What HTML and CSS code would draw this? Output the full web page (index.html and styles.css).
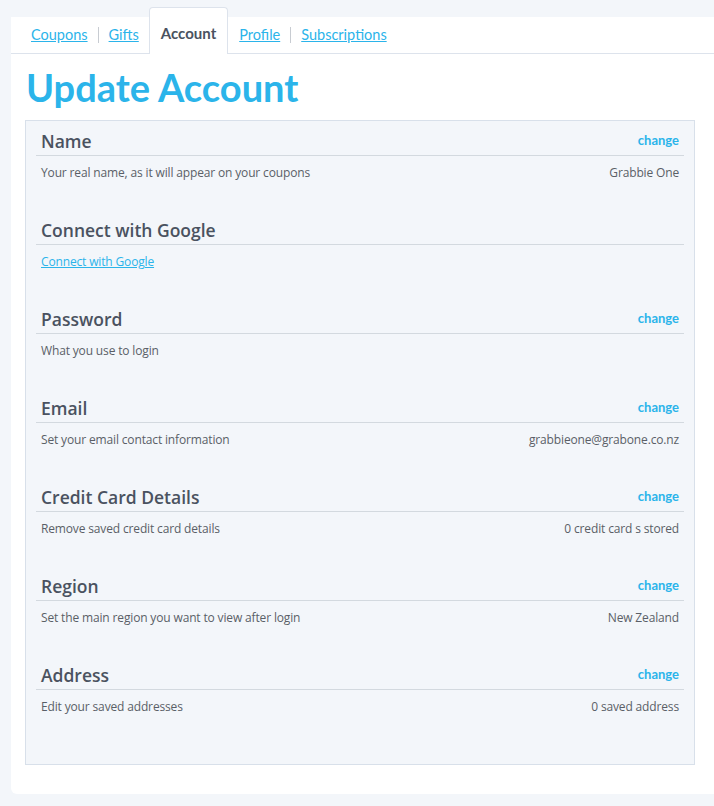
FILE: index.html
```html
<!DOCTYPE html>
<html>
<head>
<meta charset="utf-8">
<link rel="stylesheet" href="styles.css">
</head>
<body>
<div class="card">
  <nav class="tabs">
    <a class="tab" href="#">Coupons</a><span class="sep"></span>
    <a class="tab" href="#">Gifts</a>
    <span class="tab active">Account</span>
    <a class="tab" href="#">Profile</a><span class="sep"></span>
    <a class="tab" href="#">Subscriptions</a>
  </nav>
  <h1 class="title">Update Account</h1>
  <div class="panel">
    <section class="sec">
      <div class="sec-head"><h2>Name</h2><a class="change" href="#">change</a></div>
      <div class="sec-body"><span>Your real name, as it will appear on your coupons</span><span>Grabbie One</span></div>
    </section>
    <section class="sec">
      <div class="sec-head"><h2>Connect with Google</h2></div>
      <div class="sec-body"><a class="link" href="#">Connect with Google</a></div>
    </section>
    <section class="sec">
      <div class="sec-head"><h2>Password</h2><a class="change" href="#">change</a></div>
      <div class="sec-body"><span>What you use to login</span></div>
    </section>
    <section class="sec">
      <div class="sec-head"><h2>Email</h2><a class="change" href="#">change</a></div>
      <div class="sec-body"><span>Set your email contact information</span><span>grabbieone@grabone.co.nz</span></div>
    </section>
    <section class="sec">
      <div class="sec-head"><h2>Credit Card Details</h2><a class="change" href="#">change</a></div>
      <div class="sec-body"><span>Remove saved credit card details</span><span>0 credit card s stored</span></div>
    </section>
    <section class="sec">
      <div class="sec-head"><h2>Region</h2><a class="change" href="#">change</a></div>
      <div class="sec-body"><span>Set the main region you want to view after login</span><span>New Zealand</span></div>
    </section>
    <section class="sec">
      <div class="sec-head"><h2>Address</h2><a class="change" href="#">change</a></div>
      <div class="sec-body"><span>Edit your saved addresses</span><span>0 saved address</span></div>
    </section>
  </div>
</div>
</body>
</html>
```

FILE: styles.css
```css
html, body {
  margin: 0;
  padding: 0;
  background: #f3f6fa;
  font-family: "Open Sans", "Lato", sans-serif;
}
body {
  padding: 17px 0 12px 11px;
}
.card {
  background: #fff;
  border-radius: 0 0 0 6px;
  padding: 0 0 29px 14px;
}
.tabs {
  display: flex;
  align-items: center;
  height: 36px;
  border-bottom: 1px solid #dde3ec;
  margin-left: -14px;
  padding-left: 10px;
}
.tab {
  font-family: "Lato", sans-serif;
  font-size: 14.5px;
  color: #2bb4ea;
  padding: 0 10px;
  line-height: 36px;
}
a.tab { text-decoration: underline; }
.sep {
  width: 1px;
  height: 16px;
  background: #c8ccd2;
}
.tab.active {
  color: #4a5260;
  font-weight: 700;
  font-size: 15px;
  background: #fff;
  border: 1px solid #dde3ec;
  border-bottom: none;
  border-radius: 4px 4px 0 0;
  height: 47px;
  line-height: 50px;
  margin-top: -10px;
  margin-bottom: -1px;
  padding: 0 11px 0 11px;
  margin-right: 1px;
  box-sizing: border-box;
  align-self: flex-end;
}
.title {
  font-family: "Lato", sans-serif;
  font-size: 38px;
  font-weight: 700;
  color: #2bb4ea;
  margin: 12px 0 12px 1px;
  line-height: 42px;
}
.panel {
  width: 670px;
  box-sizing: border-box;
  background: #f3f6fa;
  border: 1px solid #d8e0ea;
  padding: 10px;
}
.sec {
  height: 89px;
}
.sec-head {
  display: flex;
  justify-content: space-between;
  align-items: flex-start;
  height: 24px;
  padding: 0 5px;
  border-bottom: 1px solid #d3d9df;
}
.sec-head h2 {
  margin: 0;
  font-family: "Open Sans", sans-serif;
  font-size: 17.5px;
  font-weight: 600;
  color: #4a5260;
  line-height: 20px;
}
.change {
  font-family: "Lato", sans-serif;
  font-size: 13px;
  font-weight: 700;
  color: #2bb4ea;
  text-decoration: none;
  line-height: 18px;
}
.sec-body {
  display: flex;
  justify-content: space-between;
  padding: 8px 5px 0;
  font-size: 12px;
  letter-spacing: -0.15px;
  line-height: 18px;
  color: #5a5f67;
}
.link {
  color: #2bb4ea;
  text-decoration: underline;
}
```
